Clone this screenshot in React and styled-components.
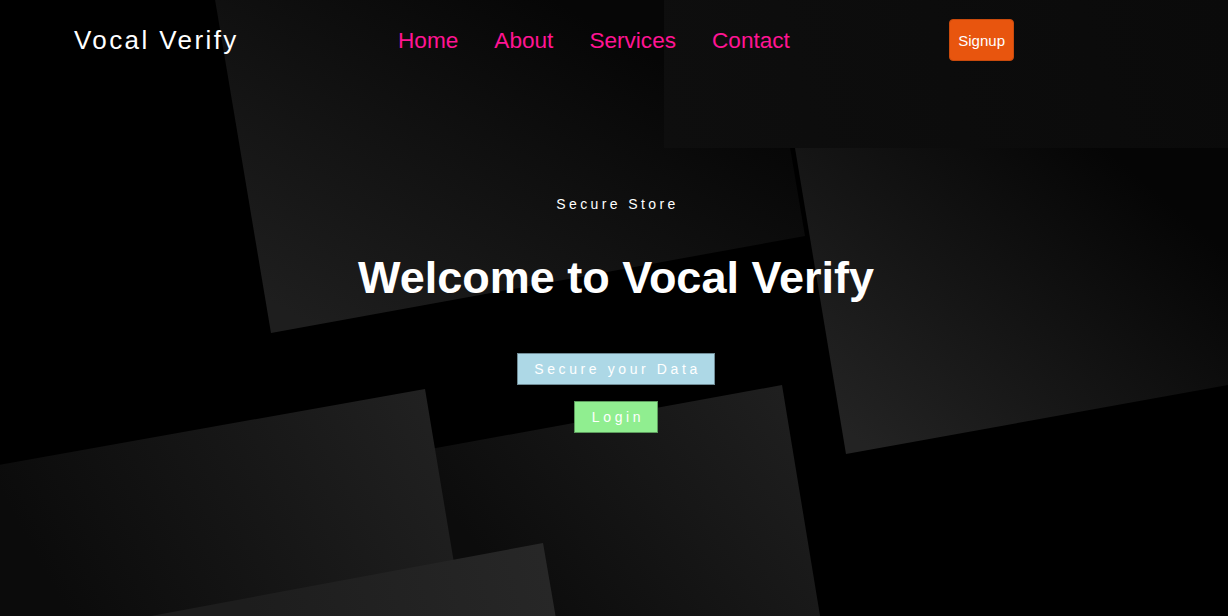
import React from "react";
import styled, { createGlobalStyle } from "styled-components";

const GlobalStyle = createGlobalStyle`
  html, body {
    margin: 0;
    padding: 0;
    background: #000;
    font-family: "Liberation Sans", Arial, sans-serif;
  }
  * { box-sizing: border-box; }
`;

const Page = styled.div`
  position: relative;
  width: 100%;
  height: 616px;
  overflow: hidden;
  background: #000;
`;

const Backdrop = styled.svg`
  position: absolute;
  inset: 0;
  width: 100%;
  height: 100%;
  z-index: 0;
`;

const Content = styled.div`
  position: relative;
  z-index: 1;
  display: flex;
  flex-direction: column;
`;

const Header = styled.header`
  height: 80px;
  display: flex;
  align-items: center;
  justify-content: space-between;
  padding: 0 214px 0 74px;
`;

const Logo = styled.div`
  color: #fff;
  font-size: 26px;
  letter-spacing: 2.4px;
  font-weight: 400;
`;

const Nav = styled.nav`
  display: flex;
  align-items: center;
  gap: 36px;
  padding-top: 2px;
`;

const NavLink = styled.a`
  color: #ff1493;
  font-size: 22.6px;
  text-decoration: none;
  cursor: pointer;
`;

const SignupButton = styled.button`
  height: 42px;
  padding: 0 8px;
  background: #e8550e;
  color: #fff;
  border: 1px solid #c94a0c;
  border-radius: 4px;
  font-family: "Liberation Sans", Arial, sans-serif;
  font-size: 15px;
  cursor: pointer;
`;

const Hero = styled.section`
  display: flex;
  flex-direction: column;
  align-items: center;
  padding-left: 4px;
`;

const Subtitle = styled.p`
  margin: 116px 0 0;
  color: #fff;
  font-size: 14px;
  line-height: 16px;
  letter-spacing: 3.4px;
  padding-left: 3px;
`;

const Title = styled.h1`
  margin: 40px 0 0;
  color: #fff;
  font-size: 45px;
  line-height: 52px;
  font-weight: 700;
`;

const Actions = styled.div`
  margin-top: 49px;
  display: flex;
  flex-direction: column;
  align-items: center;
  gap: 16px;
`;

const ActionButton = styled.button`
  height: 32px;
  padding: 0 ${(p) => p.$padR}px 0 ${(p) => p.$padL}px;
  background: ${(p) => p.$bg};
  color: #fff;
  border: 1px solid rgba(0, 0, 0, 0.35);
  font-family: "Liberation Sans", Arial, sans-serif;
  font-size: 14px;
  letter-spacing: 3.6px;
  cursor: pointer;
`;

function Shapes() {
  return (
    <Backdrop viewBox="0 0 1228 616" preserveAspectRatio="none">
      <defs>
        <linearGradient id="gA" gradientUnits="userSpaceOnUse" x1="520" y1="-20" x2="320" y2="330">
          <stop offset="0" stopColor="#060606" />
          <stop offset="1" stopColor="#1e1e1e" />
        </linearGradient>
        <linearGradient id="gR" gradientUnits="userSpaceOnUse" x1="1228" y1="0" x2="664" y2="148">
          <stop offset="0" stopColor="#0a0a0a" />
          <stop offset="1" stopColor="#0e0e0e" />
        </linearGradient>
        <linearGradient id="gB" gradientUnits="userSpaceOnUse" x1="1120" y1="160" x2="870" y2="450">
          <stop offset="0" stopColor="#050505" />
          <stop offset="1" stopColor="#232323" />
        </linearGradient>
        <linearGradient id="gC" gradientUnits="userSpaceOnUse" x1="60" y1="600" x2="430" y2="395">
          <stop offset="0" stopColor="#0b0b0b" />
          <stop offset="1" stopColor="#212121" />
        </linearGradient>
        <linearGradient id="gD" gradientUnits="userSpaceOnUse" x1="520" y1="600" x2="780" y2="390">
          <stop offset="0" stopColor="#0c0c0c" />
          <stop offset="1" stopColor="#1f1f1f" />
        </linearGradient>
        <linearGradient id="gE" gradientUnits="userSpaceOnUse" x1="250" y1="616" x2="540" y2="545">
          <stop offset="0" stopColor="#1d1d1d" />
          <stop offset="1" stopColor="#272727" />
        </linearGradient>
      </defs>
      <polygon points="200,-90 271,333 805,236 760,-30" fill="url(#gA)" />
      <polygon points="780,58 846,454 1400,354 1330,-60" fill="url(#gB)" />
      <rect x="664" y="0" width="564" height="148" fill="url(#gR)" />
      <polygon points="250,482 782,385 880,980 350,1080" fill="url(#gD)" />
      <polygon points="-120,486 425,389 520,960 -20,1060" fill="url(#gC)" />
      <polygon points="60,633 543,543 570,700 60,700" fill="url(#gE)" />
    </Backdrop>
  );
}

export default function App() {
  return (
    <>
      <GlobalStyle />
      <Page>
        <Shapes />
        <Content>
          <Header>
            <Logo>Vocal Verify</Logo>
            <Nav>
              <NavLink>Home</NavLink>
              <NavLink>About</NavLink>
              <NavLink>Services</NavLink>
              <NavLink>Contact</NavLink>
            </Nav>
            <SignupButton>Signup</SignupButton>
          </Header>
          <Hero>
            <Subtitle>Secure Store</Subtitle>
            <Title>Welcome to Vocal Verify</Title>
            <Actions>
              <ActionButton $bg="#add8e6" $padL={16} $padR={13}>
                Secure your Data
              </ActionButton>
              <ActionButton $bg="#90ee90" $padL={17} $padR={13}>
                Login
              </ActionButton>
            </Actions>
          </Hero>
        </Content>
      </Page>
    </>
  );
}
